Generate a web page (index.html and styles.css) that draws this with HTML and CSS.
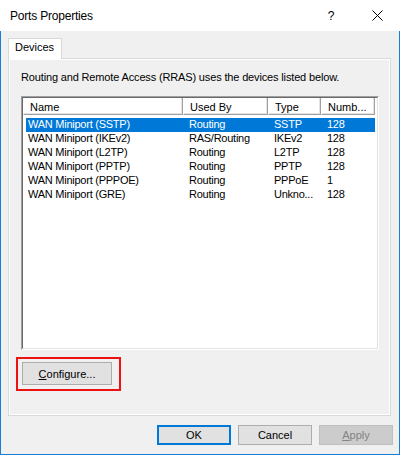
FILE: index.html
```html
<!DOCTYPE html>
<html lang="en">
<head>
    <meta charset="UTF-8">
    <title>Ports Properties</title>
    <link rel="stylesheet" href="styles.css">
</head>
<body>

<div class="window">
    <div class="titlebar">
        <span class="title">Ports Properties</span>
        <span class="caption-btn">?</span>
        <span class="caption-btn">
            <svg width="11" height="11" viewBox="0 0 11 11">
                <path d="M0.5 0.5 L10.5 10.5 M10.5 0.5 L0.5 10.5" stroke="#000" stroke-width="1" fill="none"/>
            </svg>
        </span>
    </div>

    <div class="client">
        <div class="tabs">
            <div class="tab">Devices</div>
        </div>

        <div class="tab-page">
            <p class="intro">Routing and Remote Access (RRAS) uses the devices listed below.</p>

            <div class="listview">
                <div class="lv-inner">
                    <div class="lv-header">
                        <div class="col col-name">Name</div>
                        <div class="col col-used">Used By</div>
                        <div class="col col-type">Type</div>
                        <div class="col col-num">Numb...</div>
                    </div>
                    <div class="lv-body">
                        <div class="row selected">
                            <div class="cell col-name">WAN Miniport (SSTP)</div>
                            <div class="cell col-used">Routing</div>
                            <div class="cell col-type">SSTP</div>
                            <div class="cell col-num">128</div>
                        </div>
                        <div class="row">
                            <div class="cell col-name">WAN Miniport (IKEv2)</div>
                            <div class="cell col-used">RAS/Routing</div>
                            <div class="cell col-type">IKEv2</div>
                            <div class="cell col-num">128</div>
                        </div>
                        <div class="row">
                            <div class="cell col-name">WAN Miniport (L2TP)</div>
                            <div class="cell col-used">Routing</div>
                            <div class="cell col-type">L2TP</div>
                            <div class="cell col-num">128</div>
                        </div>
                        <div class="row">
                            <div class="cell col-name">WAN Miniport (PPTP)</div>
                            <div class="cell col-used">Routing</div>
                            <div class="cell col-type">PPTP</div>
                            <div class="cell col-num">128</div>
                        </div>
                        <div class="row">
                            <div class="cell col-name">WAN Miniport (PPPOE)</div>
                            <div class="cell col-used">Routing</div>
                            <div class="cell col-type">PPPoE</div>
                            <div class="cell col-num">1</div>
                        </div>
                        <div class="row">
                            <div class="cell col-name">WAN Miniport (GRE)</div>
                            <div class="cell col-used">Routing</div>
                            <div class="cell col-type">Unkno...</div>
                            <div class="cell col-num">128</div>
                        </div>
                    </div>
                </div>
            </div>

            <div class="marked">
                <button class="btn btn-configure"><u>C</u>onfigure...</button>
            </div>
        </div>

        <div class="dialog-buttons">
            <button class="btn btn-default">OK</button>
            <button class="btn">Cancel</button>
            <button class="btn" disabled><u>A</u>pply</button>
        </div>
    </div>
</div>

</body>
</html>
```

FILE: styles.css
```css
body {
    margin: 0;
    padding: 0;
    font-family: 'Liberation Sans', Arial, sans-serif;
    font-size: 11px;
    color: #000;
    background-color: #fff;
}

.window {
    width: 400px;
    height: 455px;
    display: flex;
    flex-direction: column;
}

/* title bar */
.titlebar {
    height: 31px;
    background-color: #fff;
    display: flex;
    align-items: center;
    flex-shrink: 0;
}

.title {
    flex: 1;
    padding-left: 10px;
    font-size: 12px;
    letter-spacing: -0.2px;
}

.caption-btn {
    width: 46px;
    height: 31px;
    display: flex;
    align-items: center;
    justify-content: center;
    font-size: 12px;
}

/* dialog body */
.client {
    flex: 1;
    background-color: #f0f0f0;
    border: 1px solid #1a7fd4;
    border-top: none;
    padding: 7px 6px 9px 7px;
    display: flex;
    flex-direction: column;
}

.tabs {
    display: flex;
}

.tab {
    position: relative;
    z-index: 1;
    width: 54px;
    height: 21px;
    box-sizing: border-box;
    margin-bottom: -1px;
    padding: 2px 0 0 6px;
    line-height: 13px;
    background-color: #fff;
    border: 1px solid #d9d9d9;
    border-bottom: none;
}

.tab-page {
    height: 358px;
    box-sizing: border-box;
    margin-right: 2px;
    padding: 12px 11px 0 12px;
    border: 1px solid #d9d9d9;
    box-shadow: inset 0 0 0 1px #fff;
    display: flex;
    flex-direction: column;
    align-items: flex-start;
}

.intro {
    margin: 0 0 12px;
    line-height: 13px;
    letter-spacing: -0.15px;
}

/* list view */
.listview {
    width: 358px;
    height: 254px;
    box-sizing: border-box;
    border: 1px solid;
    border-color: #a0a0a0 #fff #fff #a0a0a0;
}

.lv-inner {
    height: 100%;
    box-sizing: border-box;
    background-color: #fff;
    border: 1px solid;
    border-color: #696969 #e3e3e3 #e3e3e3 #696969;
}

.lv-header {
    display: flex;
    height: 17px;
}

.lv-header .col {
    box-sizing: border-box;
    height: 17px;
    padding: 3px 0 0 6px;
    line-height: 13px;
    border-left: 1px solid #fff;
    border-right: 1px solid #a0a0a0;
    border-bottom: 1px solid #a0a0a0;
    box-shadow: inset -1px -1px 0 #e3e3e3;
    white-space: nowrap;
}

.lv-header .col-name { width: 160px; }
.lv-header .col-used { width: 85px; }
.lv-header .col-type { width: 53px; }
.lv-header .col-num { width: 54px; }

.lv-body {
    padding: 3px 0 0 3px;
}

.row {
    display: flex;
    height: 14px;
    line-height: 13px;
    width: 349px;
}

.row.selected {
    background-color: #0078d7;
    color: #fff;
}

.cell {
    box-sizing: border-box;
    padding-left: 6px;
    white-space: nowrap;
    letter-spacing: -0.25px;
}

.cell.col-name { width: 157px; padding-left: 2px; }
.cell.col-used { width: 85px; }
.cell.col-type { width: 53px; }
.cell.col-num { width: 54px; }

/* red frame drawn round the Configure button */
.marked {
    margin: 7px 0 0 -5px;
    padding: 3px 7px 4px 4px;
    border: 2px solid #ee1111;
}

/* push buttons */
.btn {
    font-family: 'Liberation Sans', Arial, sans-serif;
    font-size: 11px;
    color: #000;
    background-color: #e1e1e1;
    border: 1px solid #adadad;
    width: 74px;
    height: 20px;
    padding: 0;
    margin: 0;
    box-sizing: border-box;
}

.btn-configure {
    display: block;
    width: 90px;
    height: 23px;
}

.btn-default {
    border: 2px solid #0078d7;
}

.btn:disabled {
    background-color: #cccccc;
    border-color: #bfbfbf;
    color: #838383;
}

.dialog-buttons {
    display: flex;
    justify-content: flex-end;
    gap: 7px;
    margin-top: 9px;
}
```
